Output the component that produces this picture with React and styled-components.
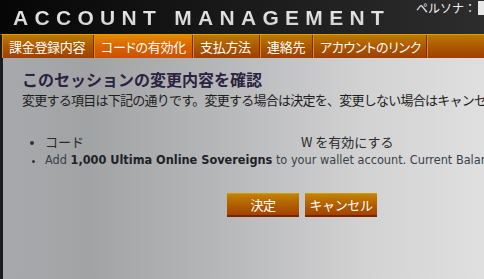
import React from 'react'
import styled, { createGlobalStyle } from 'styled-components'

const Global = createGlobalStyle`
  html, body {
    margin: 0;
    padding: 0;
    background: #000;
  }
  #root {
    width: 484px;
    height: 279px;
  }
`

const Page = styled.div`
  width: 484px;
  height: 279px;
  overflow: hidden;
  display: flex;
  flex-direction: column;
  font-family: "Noto Sans CJK JP", "DejaVu Sans", sans-serif;
`

const Header = styled.div`
  height: 34px;
  flex: none;
  display: flex;
  justify-content: space-between;
  align-items: flex-start;
  background: linear-gradient(to right, #060606 0%, #1c1c1c 55%, #2d2d2d 100%);
`

const Title = styled.div`
  font-family: "Liberation Sans", Arial, sans-serif;
  font-weight: bold;
  font-size: 21px;
  letter-spacing: 6.3px;
  line-height: 21px;
  padding: 7px 0 0 13px;
  color: #dedede;
  background: linear-gradient(to bottom, #f4f4f4 0%, #d0d0d0 100%);
  -webkit-background-clip: text;
  background-clip: text;
  -webkit-text-fill-color: transparent;
  white-space: nowrap;
`

const Persona = styled.div`
  display: flex;
  align-items: center;
  gap: 2px;
  padding-top: 1px;
  font-size: 12px;
  line-height: 14px;
  color: #f2f2f2;
  white-space: nowrap;
`

const PersonaBox = styled.span`
  display: inline-block;
  width: 6px;
  height: 14px;
  background: #e8e8e8;
`

const TabBar = styled.div`
  height: 23px;
  flex: none;
  display: flex;
  border-top: 1px solid #d9a200;
  border-left: 2px solid #1a1a1a;
  background: linear-gradient(to bottom, #bb7a00 0%, #aa5500 55%, #9e4000 100%);
`

const Tab = styled.div`
  width: ${p => p.w}px;
  flex: none;
  box-sizing: border-box;
  padding-left: 7px;
  display: flex;
  align-items: center;
  font-size: 13px;
  color: #fff;
  white-space: nowrap;
  letter-spacing: -0.3px;
  font-feature-settings: "palt";
  border-right: 1px solid #7a2e00;
  box-shadow: inset 1px 0 0 #d58a1a;
  background: ${p => p.active
    ? 'linear-gradient(to bottom, #e48a00 0%, #d86400 50%, #cc5000 100%)'
    : 'transparent'};
`

const Content = styled.div`
  flex: 1;
  border-left: 3px solid #1c1c1c;
  padding: 11px 0 0 19px;
  background: linear-gradient(to right, #a8a9ac 0%, #a2a3a5 18%, #b6b7b9 45%, #d2d2d3 75%, #dfdfdf 100%);
  overflow: hidden;
`

const Heading = styled.h2`
  margin: 0;
  font-size: 16px;
  line-height: 20px;
  font-weight: bold;
  color: #2b2340;
  white-space: nowrap;
`

const Lead = styled.p`
  margin: 2px 0 0;
  font-size: 13px;
  line-height: 17px;
  letter-spacing: -0.75px;
  color: #1e1e1e;
  white-space: nowrap;
`

const List = styled.ul`
  margin: 25px 0 0;
  padding: 0 0 0 23px;
`

const Item = styled.li`
  font-size: ${p => p.latin ? '12.6px' : '13px'};
  line-height: 18px;
  white-space: nowrap;
  font-family: ${p => p.latin ? '"DejaVu Sans Condensed", "DejaVu Sans", sans-serif' : 'inherit'};
  color: ${p => p.latin ? '#3a3f48' : '#2a2a2a'};
  &::marker {
    color: #333;
    font-size: 11px;
  }
`

const Label = styled.span`
  display: inline-block;
  width: 256px;
`

const Strong = styled.b`
  color: #1e2228;
`

const Buttons = styled.div`
  display: flex;
  gap: 6px;
  margin: 24px 0 0 205px;
`

const Button = styled.button`
  width: 72px;
  height: 24px;
  padding: 0;
  border: none;
  border-top: 1px solid #d59c00;
  border-bottom: 2px solid #7a2400;
  background: linear-gradient(to bottom, #c38300 0%, #b36200 45%, #a24300 100%);
  color: #fff;
  font-family: "Noto Sans CJK JP", sans-serif;
  font-size: 13px;
  line-height: 18px;
  letter-spacing: -0.4px;
  cursor: pointer;
`

export default function App() {
  const tabs = [
    { label: '課金登録内容', w: 92 },
    { label: 'コードの有効化', w: 99, active: true },
    { label: '支払方法', w: 67 },
    { label: '連絡先', w: 53 },
    { label: 'アカウントのリンク', w: 114 },
    { label: '', w: 60 },
  ]

  return (
    <Page>
      <Global />
      <Header>
        <Title>ACCOUNT MANAGEMENT</Title>
        <Persona>ペルソナ：<PersonaBox /></Persona>
      </Header>
      <TabBar>
        {tabs.map((t, i) => (
          <Tab key={i} w={t.w} active={t.active}>{t.label}</Tab>
        ))}
      </TabBar>
      <Content>
        <Heading>このセッションの変更内容を確認</Heading>
        <Lead>変更する項目は下記の通りです。変更する場合は決定を、変更しない場合はキャンセルを押してください。</Lead>
        <List>
          <Item><Label>コード</Label>W を有効にする</Item>
          <Item latin>
            Add <Strong>1,000 Ultima Online Sovereigns</Strong> to your wallet account. Current Balance: 0
          </Item>
        </List>
        <Buttons>
          <Button>決定</Button>
          <Button>キャンセル</Button>
        </Buttons>
      </Content>
    </Page>
  )
}
